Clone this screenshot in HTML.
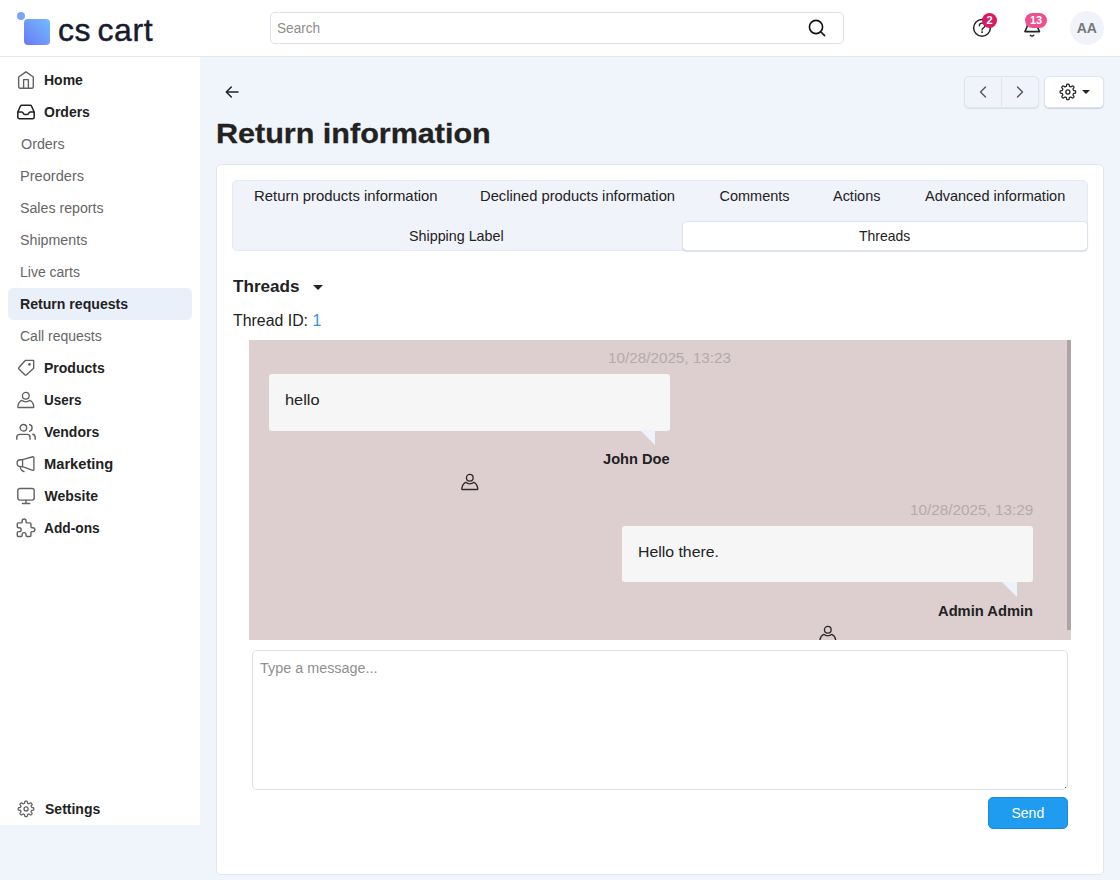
<!DOCTYPE html>
<html lang="en">
<head>
<meta charset="utf-8">
<title>Return information</title>
<style>
*{box-sizing:border-box;margin:0;padding:0}
html,body{width:1120px;height:880px;overflow:hidden}
body{font-family:"Liberation Sans","DejaVu Sans",sans-serif;font-size:14px;color:#222;background:#f0f4fb;position:relative}
.abs{position:absolute}
.t{position:absolute;white-space:nowrap;transform-origin:0 50%}
svg{display:block;overflow:visible}
/* header */
#header{position:absolute;left:0;top:0;width:1120px;height:57px;background:#fff;border-bottom:1px solid #e1e7f0}
#logo-dot{position:absolute;left:16.500px;top:11.500px;width:8px;height:8px;border-radius:50%;background:#7aa5fb}
#logo-sq{position:absolute;left:24px;top:19px;width:25.500px;height:25.500px;border-radius:4px;background:linear-gradient(45deg,#6c74f8 0%,#6ea0fa 55%,#72bbfc 100%)}
#logo-text{position:absolute;left:58px;top:10px;font-size:32px;line-height:40px;color:#171b30;letter-spacing:.55px;white-space:nowrap;word-spacing:-3px;-webkit-text-stroke:.45px #171b30}
#search{position:absolute;left:270px;top:12px;width:574px;height:32px;border:1px solid #dce2ec;border-radius:5px;background:#fff}
#search span{top:6px;font-size:14px;line-height:18px;color:#8e8e8e}
#avatar{position:absolute;left:1070px;top:11px;width:34px;height:34px;border-radius:50%;background:#f0f3fa;color:#777;font-weight:bold;font-size:14px;line-height:34px;text-align:center;}
.badge{position:absolute;height:15px;border-radius:7.500px;color:#fff;font-weight:bold;font-size:11px;line-height:15px;text-align:center}
/* sidebar */
#sidebar{position:absolute;left:0;top:57px;width:200px;height:768px;background:#fff}
.nav{position:absolute;left:8px;width:184px;height:32px;border-radius:5px;line-height:32px;font-size:14px;white-space:nowrap}
.nav.top{font-weight:bold;color:#222}
.nav.sub{color:#666}
.nav.active{background:#eaf0fa;color:#222;font-weight:bold}
.nav svg{position:absolute;left:9px;top:7px}
/* main */
#title{top:112.500px;font-size:28px;-webkit-text-stroke:.3px #222;line-height:42px;font-weight:bold;color:#222}
#card{position:absolute;left:216px;top:164px;width:888px;height:711px;background:#fff;border:1px solid #e1e5ec;border-radius:5px}
#tabs{position:absolute;left:232px;top:180px;width:856px;height:71px;background:#f0f3fa;border:1px solid #e4e9f2;border-radius:5px}
.tab{font-size:14.500px;line-height:20px;color:#222}
.ts{font-size:14px;line-height:20px;color:#b4aaab}
.msg{font-size:15px;line-height:20px;color:#222}
.nm{font-size:14px;line-height:20px;font-weight:bold;color:#222}
#tab-active{position:absolute;left:681.500px;top:220.500px;width:406.500px;height:30.500px;background:#fff;border:1px solid #dde3ee;border-radius:5px;box-shadow:0 1px 1px rgba(120,140,180,.25)}
.btn{position:absolute;height:32px;border-radius:5px}
</style>
</head>
<body>
<div id="header">
  <div id="logo-dot"></div>
  <div id="logo-sq"></div>
  <div id="logo-text">cs cart</div>
  <div id="search"><span class="t" id="search_t" style="left:6px;transform:scaleX(0.9723)">Search</span>
    <svg class="abs" style="left:536.100px;top:5px" width="20" height="20" viewBox="0 0 20 20" fill="none" stroke="#111" stroke-width="1.6" stroke-linecap="round"><circle cx="9" cy="9" r="6.6"/><path d="M14 14l3.6 3.6"/></svg>
  </div>
  <!-- help -->
  <svg class="abs" style="left:972px;top:18px" width="20" height="20" viewBox="0 0 20 20" fill="none" stroke="#222" stroke-width="1.5" stroke-linecap="round"><circle cx="10" cy="9.900" r="8.350"/><path stroke-width="1.250" d="M7.300 7.800a2.700 2.700 0 1 1 4 2.300c-.9.500-1.300 1-1.300 1.900"/><circle cx="9.950" cy="14.100" r=".4" fill="#222" stroke-width="1"/></svg>
  <div class="badge" style="left:982px;top:13px;width:15px;background:#d81b60">2</div>
  <!-- bell -->
  <svg class="abs" style="left:1022px;top:18px" width="20" height="20" viewBox="0 0 20 20" fill="none" stroke="#222" stroke-width="1.550" stroke-linecap="round" stroke-linejoin="round"><path d="M2.900 13.600L5.300 8.300V6.500a4.900 4.900 0 0 1 9.800 0v1.800l2.400 5.300z"/><path d="M8.400 17.200q1.650 1.700 3.300 0"/></svg>
  <div class="badge" style="left:1025px;top:13px;width:22px;background:#ee4f8e">13</div>
  <div id="avatar"></div><div class="t" id="aa" style="top:11px;line-height:34px;font-size:14px;font-weight:bold;color:#777;left:1076.64px;transform:scaleX(1)">AA</div>
</div>

<div id="sidebar">
  <div class="nav top" style="top:7px"><svg width="18" height="18" viewBox="0 0 18 18" fill="none" stroke="#616161" stroke-width="1.4" stroke-linejoin="round"><path d="M1.650 6.300a.7.7 0 0 1 .3-.580L8.980.820l7.030 4.900a.7.7 0 0 1 .3.580V15.700a1.500 1.500 0 0 1-1.500 1.500H3.150a1.500 1.500 0 0 1-1.500-1.500z"/><path d="M6.600 17.180V8.660h4.770v8.520"/></svg><span class="t" id="n_home" style="left:36px;transform:scaleX(1)">Home</span></div>
  <div class="nav top" style="top:39px"><svg width="18" height="18" viewBox="0 0 18 18" fill="none" stroke="#222" stroke-width="1.550" stroke-linejoin="round"><path d="M.8 9L3.500 3a1.300 1.300 0 0 1 1.200-.82h8.560a1.300 1.300 0 0 1 1.200.82L17.160 9v5.150a1.500 1.500 0 0 1-1.500 1.500H2.300a1.500 1.500 0 0 1-1.500-1.500z"/><path d="M.8 9h4c.9 0 1.100.5 1.400 1.200.3.800.9 1.200 1.700 1.200h2.160c.8 0 1.400-.4 1.700-1.200.3-.7.500-1.200 1.400-1.200h4"/></svg><span class="t" id="n_orders" style="left:36px;transform:scaleX(1)">Orders</span></div>
  <div class="nav sub" style="top:71px"><span class="t" id="s_orders" style="left:12.5px;transform:scaleX(1.0223)">Orders</span></div>
  <div class="nav sub" style="top:103px"><span class="t" id="s_preorders" style="left:11.5px;transform:scaleX(1.0422)">Preorders</span></div>
  <div class="nav sub" style="top:135px"><span class="t" id="s_sales" style="left:12px;transform:scaleX(1.0136)">Sales reports</span></div>
  <div class="nav sub" style="top:167px"><span class="t" id="s_ship" style="left:12px;transform:scaleX(1.017)">Shipments</span></div>
  <div class="nav sub" style="top:199px"><span class="t" id="s_live" style="left:12px;transform:scaleX(1)">Live carts</span></div>
  <div class="nav sub active" style="top:231px"><span class="t" id="s_return" style="left:12px;transform:scaleX(1.0072)">Return requests</span></div>
  <div class="nav sub" style="top:263px"><span class="t" id="s_call" style="left:12px;transform:scaleX(1)">Call requests</span></div>
  <div class="nav top" style="top:295px"><svg width="18" height="18" viewBox="0 0 18 18" fill="none" stroke="#616161" stroke-width="1.400" stroke-linejoin="round"><path d="M8.470 1.330h8.180v8.010L9.500 15.750a1.200 1.200 0 0 1-1.700-.05L1.900 9.900a1 1 0 0 1 .05-1.450z"/><circle cx="12.460" cy="5.420" r="1.300" fill="#616161" stroke="none"/></svg><span class="t" id="n_products" style="left:36px;transform:scaleX(1)">Products</span></div>
  <div class="nav top" style="top:327px"><svg width="18" height="18" viewBox="0 0 18 18" fill="none" stroke="#616161" stroke-width="1.350" stroke-linejoin="round"><circle cx="8.800" cy="4.740" r="3.350"/><path d="M1.600 16.500h14.400a.8.800 0 0 0 .8-.950c-.5-3.200-1.900-5.300-3.900-6.200-1.200 1-2.600 1.550-4.100 1.550s-2.900-.55-4.100-1.550c-2 .9-3.400 3-3.900 6.200a.8.800 0 0 0 .8.950z"/></svg><span class="t" id="n_users" style="left:36px;transform:scaleX(0.962)">Users</span></div>
  <div class="nav top" style="top:359px"><svg width="18" height="18" viewBox="0 0 18 18" fill="none" stroke="#616161" stroke-width="1.400"><circle cx="6.420" cy="4.740" r="3.240"/><path d="M-.23 16.840V14.400a3 3 0 0 1 3-3h7.300a3 3 0 0 1 3 3v2.440"/><path d="M12.050 1.330a3.530 3.530 0 0 1 0 6.990"/><path d="M15.290 11.200a3.100 3.100 0 0 1 2.890 3.100v2.540"/></svg><span class="t" id="n_vendors" style="left:35.94px;transform:scaleX(1)">Vendors</span></div>
  <div class="nav top" style="top:391px"><svg width="18" height="18" viewBox="0 0 18 18" fill="none" stroke="#616161" stroke-width="1.350" stroke-linecap="round" stroke-linejoin="round"><path d="M5.570 4.570L15.800 1.750a.9.900 0 0 1 1.100.9V14.500a.9.900 0 0 1-1.100.9L5.570 11.730z"/><path d="M5.570 4.740H3.500a3.410 3.410 0 0 0 0 6.820h2.070"/><path d="M3.350 12.070c.1 2.300 1.400 3.900 3.600 4.430"/></svg><span class="t" id="n_marketing" style="left:36px;transform:scaleX(1.0478)">Marketing</span></div>
  <div class="nav top" style="top:423px"><svg width="18" height="18" viewBox="0 0 18 18" fill="none" stroke="#616161" stroke-width="1.400" stroke-linecap="round"><rect x=".8" y="1.500" width="16.360" height="11.600" rx="2"/><path d="M8.980 13.100v3.300M5.400 16.430h7.330"/></svg><span class="t" id="n_website" style="left:36.5px;transform:scaleX(1)">Website</span></div>
  <div class="nav top" style="top:455px"><svg width="18" height="18" viewBox="0 0 18 18" fill="none" stroke="#616161" stroke-width="1.450" stroke-linejoin="round" stroke-linecap="round"><path transform="translate(-2.650 -2.950) scale(.975)" d="M4 7h3a1 1 0 0 0 1-1v-1a2 2 0 0 1 4 0v1a1 1 0 0 0 1 1h3a1 1 0 0 1 1 1v3a1 1 0 0 0 1 1h1a2 2 0 0 1 0 4h-1a1 1 0 0 0-1 1v3a1 1 0 0 1-1 1h-3a1 1 0 0 1-1-1v-1a2 2 0 0 0-4 0v1a1 1 0 0 1-1 1h-3a1 1 0 0 1-1-1v-3a1 1 0 0 1 1-1h1a2 2 0 0 0 0-4h-1a1 1 0 0 1-1-1v-3a1 1 0 0 1 1-1"/></svg><span class="t" id="n_addons" style="left:35.5px;transform:scaleX(0.9803)">Add-ons</span></div>
  <div class="nav top" style="top:736px"><svg width="18" height="18" viewBox="0 0 18 18" fill="none" stroke="#616161" stroke-width="1.250" stroke-linejoin="round"><circle cx="9.050" cy="8.900" r="2.050"/><path d="M16.85 8.9L16.84 9.24L16.8 9.58L16.67 9.9L16.18 10.16L15.21 10.27L14.71 10.42L14.55 10.64L14.46 10.87L14.36 11.1L14.26 11.33L14.17 11.56L14.13 11.83L14.37 12.29L14.98 13.05L15.15 13.58L15.01 13.9L14.8 14.17L14.57 14.42L14.32 14.65L14.05 14.86L13.73 15L13.2 14.83L12.44 14.22L11.98 13.98L11.71 14.02L11.48 14.11L11.25 14.21L11.02 14.31L10.79 14.4L10.57 14.56L10.42 15.06L10.31 16.03L10.05 16.52L9.73 16.65L9.39 16.69L9.05 16.7L8.71 16.69L8.37 16.65L8.05 16.52L7.79 16.03L7.68 15.06L7.53 14.56L7.31 14.4L7.08 14.31L6.85 14.21L6.62 14.11L6.39 14.02L6.12 13.98L5.66 14.22L4.9 14.83L4.37 15L4.05 14.86L3.78 14.65L3.53 14.42L3.3 14.17L3.09 13.9L2.95 13.58L3.12 13.05L3.73 12.29L3.97 11.83L3.93 11.56L3.84 11.33L3.74 11.1L3.64 10.87L3.55 10.64L3.39 10.42L2.89 10.27L1.92 10.16L1.43 9.9L1.3 9.58L1.26 9.24L1.25 8.9L1.26 8.56L1.3 8.22L1.43 7.9L1.92 7.64L2.89 7.53L3.39 7.38L3.55 7.16L3.64 6.93L3.74 6.7L3.84 6.47L3.93 6.24L3.97 5.97L3.73 5.51L3.12 4.75L2.95 4.22L3.09 3.9L3.3 3.63L3.53 3.38L3.78 3.15L4.05 2.94L4.37 2.8L4.9 2.97L5.66 3.58L6.12 3.82L6.39 3.78L6.62 3.69L6.85 3.59L7.08 3.49L7.31 3.4L7.53 3.24L7.68 2.74L7.79 1.77L8.05 1.28L8.37 1.15L8.71 1.11L9.05 1.1L9.39 1.11L9.73 1.15L10.05 1.28L10.31 1.77L10.42 2.74L10.57 3.24L10.79 3.4L11.02 3.49L11.25 3.59L11.48 3.69L11.71 3.78L11.98 3.82L12.44 3.58L13.2 2.97L13.73 2.8L14.05 2.94L14.32 3.15L14.57 3.38L14.8 3.63L15.01 3.9L15.15 4.22L14.98 4.75L14.37 5.51L14.13 5.97L14.17 6.24L14.26 6.47L14.36 6.7L14.46 6.93L14.55 7.16L14.71 7.38L15.21 7.53L16.18 7.64L16.67 7.9L16.8 8.22L16.84 8.56z"/></svg><span class="t" id="n_settings" style="left:36.5px;transform:scaleX(1.0003)">Settings</span></div>
</div>

<!-- main top controls -->
<svg class="abs" style="left:224px;top:84px" width="16" height="16" viewBox="0 0 16 16" fill="none" stroke="#222" stroke-width="1.500" stroke-linecap="round" stroke-linejoin="round"><path d="M14 8H2.500M7.300 3L2.300 8l5 5"/></svg>
<div class="btn" style="left:964px;top:76px;width:74.500px;background:#f0f3fa;border:1px solid #dfe5f0;box-shadow:0 1px 1px rgba(120,140,180,.2)">
  <div class="abs" style="left:36px;top:0;width:1px;height:30px;background:#dfe5f0"></div>
  <svg class="abs" style="left:10px;top:7px" width="16" height="16" viewBox="0 0 16 16" fill="none" stroke="#555" stroke-width="1.400" stroke-linecap="round" stroke-linejoin="round"><path d="M10.500 3L5.500 8l5 5"/></svg>
  <svg class="abs" style="left:47px;top:7px" width="16" height="16" viewBox="0 0 16 16" fill="none" stroke="#555" stroke-width="1.400" stroke-linecap="round" stroke-linejoin="round"><path d="M5.500 3l5 5-5 5"/></svg>
</div>
<div class="btn" style="left:1044px;top:76px;width:60px;background:#fff;border:1px solid #dfe5f0;box-shadow:0 1px 1px rgba(120,140,180,.3)">
  <svg class="abs" style="left:14px;top:5.500px" width="18" height="18" viewBox="0 0 18 18" fill="none" stroke="#222" stroke-width="1.250" stroke-linejoin="round"><circle cx="8.900" cy="8.950" r="2.050"/><path d="M16.7 8.95L16.69 9.29L16.65 9.63L16.52 9.95L16.03 10.21L15.06 10.32L14.56 10.47L14.4 10.69L14.31 10.92L14.21 11.15L14.11 11.38L14.02 11.61L13.98 11.88L14.22 12.34L14.83 13.1L15 13.63L14.86 13.95L14.65 14.22L14.42 14.47L14.17 14.7L13.9 14.91L13.58 15.05L13.05 14.88L12.29 14.27L11.83 14.03L11.56 14.07L11.33 14.16L11.1 14.26L10.87 14.36L10.64 14.45L10.42 14.61L10.27 15.11L10.16 16.08L9.9 16.57L9.58 16.7L9.24 16.74L8.9 16.75L8.56 16.74L8.22 16.7L7.9 16.57L7.64 16.08L7.53 15.11L7.38 14.61L7.16 14.45L6.93 14.36L6.7 14.26L6.47 14.16L6.24 14.07L5.97 14.03L5.51 14.27L4.75 14.88L4.22 15.05L3.9 14.91L3.63 14.7L3.38 14.47L3.15 14.22L2.94 13.95L2.8 13.63L2.97 13.1L3.58 12.34L3.82 11.88L3.78 11.61L3.69 11.38L3.59 11.15L3.49 10.92L3.4 10.69L3.24 10.47L2.74 10.32L1.77 10.21L1.28 9.95L1.15 9.63L1.11 9.29L1.1 8.95L1.11 8.61L1.15 8.27L1.28 7.95L1.77 7.69L2.74 7.58L3.24 7.43L3.4 7.21L3.49 6.98L3.59 6.75L3.69 6.52L3.78 6.29L3.82 6.02L3.58 5.56L2.97 4.8L2.8 4.27L2.94 3.95L3.15 3.68L3.38 3.43L3.63 3.2L3.9 2.99L4.22 2.85L4.75 3.02L5.51 3.63L5.97 3.87L6.24 3.83L6.47 3.74L6.7 3.64L6.93 3.54L7.16 3.45L7.38 3.29L7.53 2.79L7.64 1.82L7.9 1.33L8.22 1.2L8.56 1.16L8.9 1.15L9.24 1.16L9.58 1.2L9.9 1.33L10.16 1.82L10.27 2.79L10.42 3.29L10.64 3.45L10.87 3.54L11.1 3.64L11.33 3.74L11.56 3.83L11.83 3.87L12.29 3.63L13.05 3.02L13.58 2.85L13.9 2.99L14.17 3.2L14.42 3.43L14.65 3.68L14.86 3.95L15 4.27L14.83 4.8L14.22 5.56L13.98 6.02L14.02 6.29L14.11 6.52L14.21 6.75L14.31 6.98L14.4 7.21L14.56 7.43L15.06 7.58L16.03 7.69L16.52 7.95L16.65 8.27L16.69 8.61z"/></svg>
  <div class="abs" style="left:37px;top:13px;width:0;height:0;border-left:4.500px solid transparent;border-right:4.500px solid transparent;border-top:4.500px solid #222"></div>
</div>

<div class="t" id="title" style="left:215.62px;transform:scaleX(1.0904)">Return information</div>
<div id="card"></div>
<div id="tabs"></div>
<div id="tab-active"></div>
<div class="t tab" id="tab1" style="top:186px;left:253.5px;transform:scaleX(1.0263)">Return products information</div>
<div class="t tab" id="tab2" style="top:186px;left:480.25px;transform:scaleX(1.0168)">Declined products information</div>
<div class="t tab" id="tab3" style="top:186px;left:719.5px;transform:scaleX(1)">Comments</div>
<div class="t tab" id="tab4" style="top:186px;left:832.78px;transform:scaleX(0.9968)">Actions</div>
<div class="t tab" id="tab5" style="top:186px;left:925px;transform:scaleX(1)">Advanced information</div>
<div class="t tab" id="tab6" style="top:226px;left:409px;transform:scaleX(0.9864)">Shipping Label</div>
<div class="t tab" id="tab7" style="top:226px;left:859px;transform:scaleX(0.9615)">Threads</div>

<div class="t" id="h_threads" style="top:274.500px;font-size:17px;line-height:24px;font-weight:bold;color:#222;left:232.5px;transform:scaleX(1.0061)">Threads</div>
<div class="abs" style="left:312.900px;top:284.500px;width:0;height:0;border-left:5.200px solid transparent;border-right:5.200px solid transparent;border-top:5.700px solid #222"></div>
<div class="t" id="thread_id" style="top:310.200px;font-size:15.800px;line-height:22px;color:#222;left:232.5px;transform:scaleX(1.0051)">Thread ID: <span id="thread_no" style="color:#2b97dc">1</span></div>

<!-- chat -->
<div class="abs" style="left:249px;top:340px;width:822px;height:300px;background:#ddcfd0;overflow:hidden">
  <div class="abs" style="left:20px;top:34px;width:400.500px;height:56.500px;background:#f6f6f6;border-radius:3px"></div>
  <div class="abs" style="left:390.500px;top:90.400px;width:0;height:0;border-top:15.500px solid #eef2fb;border-left:15.200px solid transparent"></div>
  <svg class="abs" style="left:212.050px;top:133px" width="18" height="18" viewBox="0 0 18 18" fill="none" stroke="#2f2929" stroke-width="1.350" stroke-linejoin="round"><circle cx="8.800" cy="4.740" r="3.350"/><path d="M1.600 16.500h14.400a.8.800 0 0 0 .8-.950c-.5-3.200-1.900-5.300-3.900-6.200-1.200 1-2.600 1.550-4.100 1.550s-2.900-.55-4.100-1.550c-2 .9-3.400 3-3.900 6.200a.8.800 0 0 0 .8.950z"/></svg>
  <div class="abs" style="left:373.300px;top:186.200px;width:410.300px;height:56.200px;background:#f6f6f6;border-radius:3px"></div>
  <div class="abs" style="left:753px;top:242.400px;width:0;height:0;border-top:15.800px solid #eef2fb;border-left:15.600px solid transparent"></div>
  <svg class="abs" style="left:570.050px;top:284.920px" width="18" height="18" viewBox="0 0 18 18" fill="none" stroke="#2f2929" stroke-width="1.350" stroke-linejoin="round"><circle cx="8.800" cy="4.740" r="3.350"/><path d="M1.600 16.500h14.400a.8.800 0 0 0 .8-.950c-.5-3.200-1.900-5.300-3.900-6.200-1.200 1-2.600 1.550-4.100 1.550s-2.900-.55-4.100-1.550c-2 .9-3.400 3-3.900 6.200a.8.800 0 0 0 .8.950z"/></svg>
  <div class="abs" style="left:818px;top:0;width:4px;height:289.700px;background:#aca4a5"></div>
</div>
<div class="t ts" id="ts1" style="top:348px;left:608px;transform:scaleX(1.0897)">10/28/2025, 13:23</div>
<div class="t ts" id="ts2" style="top:500px;left:910px;transform:scaleX(1.0918)">10/28/2025, 13:29</div>
<div class="t msg" id="hello1" style="top:389.700px;left:285px;transform:scaleX(1.0907)">hello</div>
<div class="t msg" id="hello2" style="top:541.700px;left:637.94px;transform:scaleX(1.0544)">Hello there.</div>
<div class="t nm" id="name1" style="top:449px;left:602.94px;transform:scaleX(1.0454)">John Doe</div>
<div class="t nm" id="name2" style="top:601px;left:938px;transform:scaleX(1.0511)">Admin Admin</div>

<div class="abs" style="left:252px;top:650px;width:816px;height:140px;border:1px solid #dce2ec;border-radius:5px;background:#fff"></div>
<div class="abs" style="left:1064.500px;top:786.500px;width:1.500px;height:1.500px;background:#555"></div>
<div class="t" id="ph" style="top:658px;font-size:14px;line-height:20px;color:#8f8f8f;left:260px;transform:scaleX(1.0271)">Type a message...</div>
<div class="abs" style="left:988px;top:797px;width:80px;height:32px;background:#1f9cf0;border:1px solid #1a8ad8;border-radius:5px"></div>
<div class="t" id="send" style="top:803px;font-size:14px;line-height:20px;color:#fff;left:1011.5px;transform:scaleX(1)">Send</div>
</body>
</html>
